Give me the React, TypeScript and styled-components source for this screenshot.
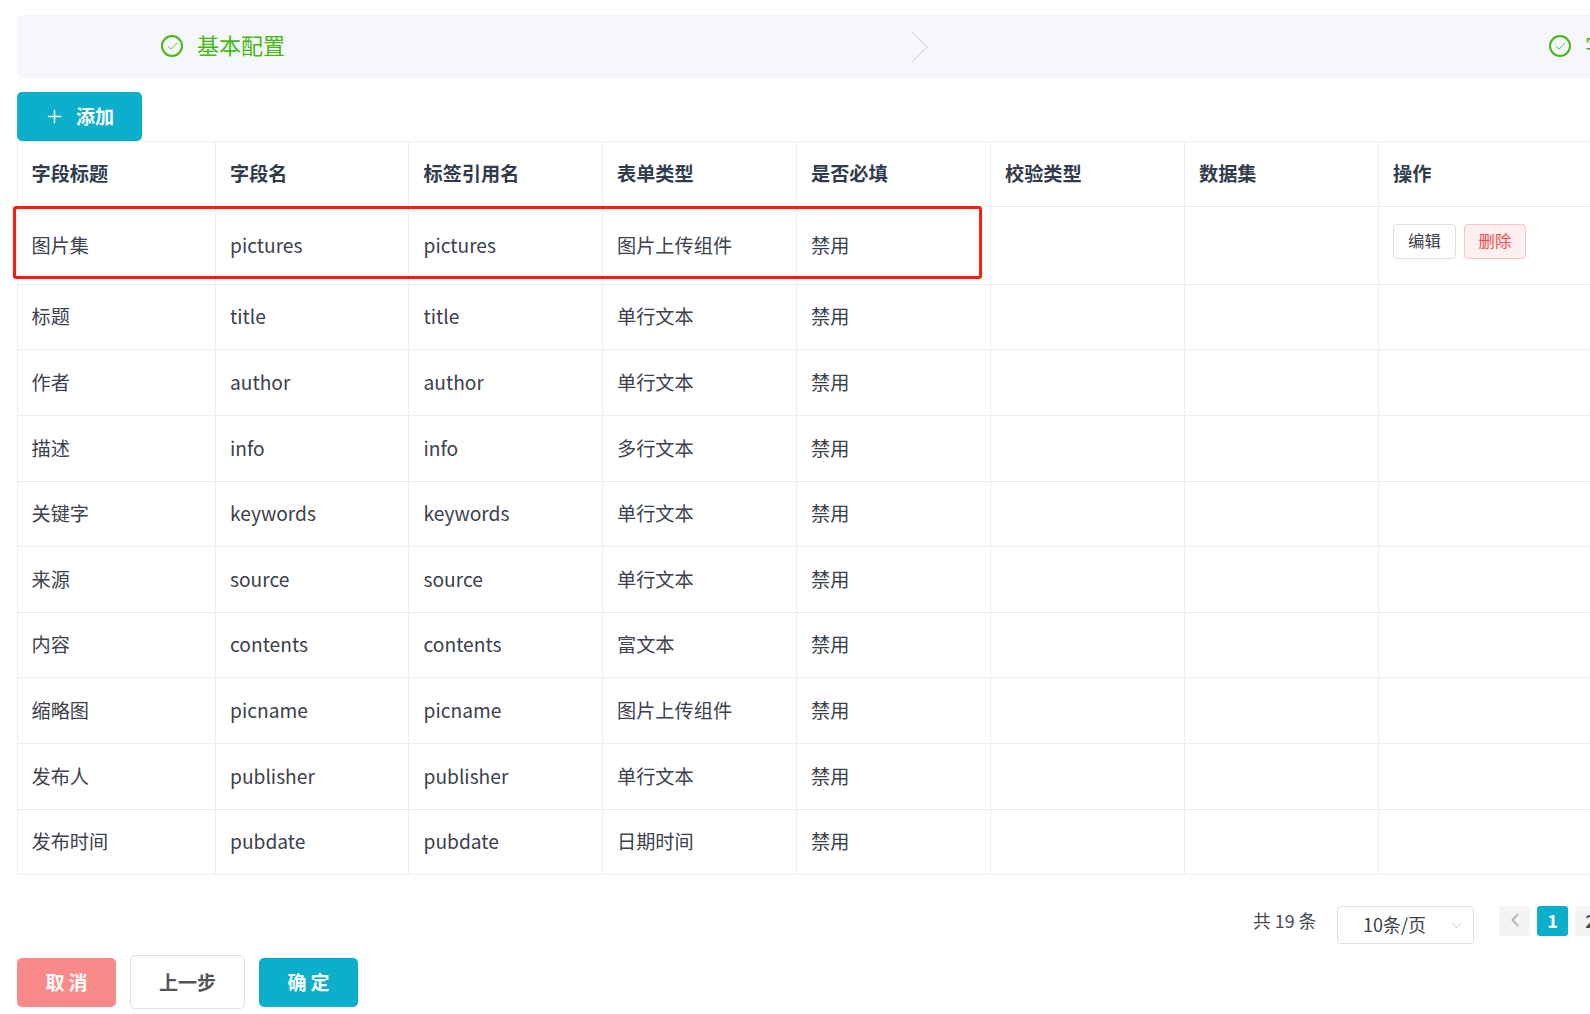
import React from 'react';
import styled, { createGlobalStyle } from 'styled-components';
import { Check, ChevronDown, ChevronLeft, Plus } from 'lucide-react';

const GlobalStyle = createGlobalStyle`
  html, body {
    margin: 0;
    padding: 0;
    background: #fff;
    overflow: hidden;
    height: 100%;
  }
  body {
    font-family: "Noto Sans CJK SC", "Noto Sans", sans-serif;
    color: #3f4450;
  }
`;

const Page = styled.div`
  width: 1700px;
  height: 1014px;
  padding: 15px 0 0 17px;
  box-sizing: border-box;
`;

const StepBar = styled.div`
  width: 1683px;
  height: 63px;
  background: #f5f7fa;
  border-radius: 6px 0 0 6px;
  display: flex;
  align-items: center;
  padding-left: 144px;
  box-sizing: border-box;
`;

const Step = styled.div<{ $width: number }>`
  width: ${p => p.$width}px;
  display: flex;
  align-items: center;
  gap: 14px;
  flex-shrink: 0;
  font-size: 22px;
  line-height: 30px;
  padding-bottom: 1px;
  color: #45b812;
`;

const StepLabel = styled.span`
  position: relative;
  top: -2px;
`;

const StepIcon = styled.span`
  width: 22px;
  height: 22px;
  box-sizing: border-box;
  border: 2px solid #45b812;
  border-radius: 50%;
  display: flex;
  align-items: center;
  justify-content: center;
`;

const StepArrow = styled.svg`
  width: 16px;
  height: 30px;
  flex-shrink: 0;
  margin-right: 621px;
`;

const Toolbar = styled.div`
  padding-top: 14px;
  height: 49px;
  box-sizing: content-box;
`;

const AddButton = styled.button`
  width: 125px;
  height: 49px;
  border: 0;
  border-radius: 5px;
  background: #0bafcc;
  color: #fff;
  font: 700 19px "Noto Sans CJK SC", sans-serif;
  display: flex;
  align-items: center;
  justify-content: center;
  gap: 11px;
  padding: 0 0 2px;

  svg {
    margin: 2px 0 0 -1px;
  }
`;

const TableWrap = styled.div`
  position: relative;
`;

const Table = styled.table`
  border-collapse: collapse;
  table-layout: fixed;
  width: 1683px;
  font-size: 19.2px;
  border-left: 1px solid #ebeef5;
`;

const HeadCell = styled.th`
  height: 65px;
  padding: 0 0 3px 14px;
  box-sizing: border-box;
  border: 1px solid #ebeef5;
  border-left: 0;
  text-align: left;
  font-weight: 700;
  font-size: 19.2px;
  color: #333c4d;

  &:first-child {
    padding-left: 13.5px;
  }
  &:nth-child(3) {
    padding-left: 14.5px;
  }
`;

const Row = styled.tr<{ $height: number }>`
  height: ${p => p.$height}px;
`;

const Cell = styled.td`
  padding: 0 0 2px 14px;
  box-sizing: border-box;
  border: 1px solid #ebeef5;
  border-left: 0;
  color: #3c414d;
  white-space: nowrap;

  &:first-child {
    padding-left: 13.5px;
  }
  &:nth-child(3) {
    padding-left: 14.5px;
  }
`;

const ActionCell = styled(Cell)`
  padding-bottom: 9px;
`;

const ActionGroup = styled.div`
  display: flex;
  gap: 8px;
`;

const SmallButton = styled.button<{ $danger?: boolean }>`
  height: 35px;
  width: ${p => (p.$danger ? 62 : 63)}px;
  padding: 0 0 2px;
  border-radius: 4px;
  font: 400 16.4px "Noto Sans CJK SC", sans-serif;
  border: 1px solid ${p => (p.$danger ? '#fbc4c4' : '#dcdfe6')};
  background: ${p => (p.$danger ? '#fef0f0' : '#fff')};
  color: ${p => (p.$danger ? '#f4484a' : '#3c414d')};
`;

const Highlight = styled.div`
  position: absolute;
  left: -4px;
  top: 65px;
  width: 969px;
  height: 73px;
  border: 3px solid #fb1d12;
  border-radius: 3px;
  box-sizing: border-box;
  pointer-events: none;
`;

const Pager = styled.div`
  display: flex;
  align-items: flex-start;
  padding: 31px 0 0 1236px;
  box-sizing: content-box;
  height: 38px;
`;

const PagerTotal = styled.span`
  width: 84px;
  flex-shrink: 0;
  font-size: 17.8px;
  line-height: 28px;
  color: #454953;
`;

const PageSize = styled.div`
  width: 137px;
  height: 38px;
  flex-shrink: 0;
  box-sizing: border-box;
  border: 1px solid #dcdfe6;
  border-radius: 4px;
  display: flex;
  align-items: center;
  justify-content: space-between;
  padding: 0 7px 3px 25px;
  font-size: 18px;
  color: #3c414d;

  svg {
    margin-top: 3px;
  }
`;

const PageButton = styled.div<{ $active?: boolean; $left?: number }>`
  width: 31px;
  height: 30px;
  flex-shrink: 0;
  margin-left: ${p => p.$left ?? 7}px;
  padding-bottom: 2px;
  box-sizing: border-box;
  border-radius: 3px;
  background: ${p => (p.$active ? '#0bafcc' : '#f4f4f5')};
  color: ${p => (p.$active ? '#fff' : '#454a55')};
  font-weight: 700;
  font-size: 18px;
  display: flex;
  align-items: center;
  justify-content: center;
`;

const Footer = styled.div`
  display: flex;
  align-items: center;
  gap: 14px;
  margin-top: 11px;
`;

const FooterButton = styled.button<{ $tone: 'cancel' | 'plain' | 'primary' }>`
  width: ${p => (p.$tone === 'plain' ? 115 : 99)}px;
  height: ${p => (p.$tone === 'plain' ? 54 : 49)}px;
  padding: 0 0 1px ${p => (p.$tone === 'plain' ? 0 : 4)}px;
  border-radius: 5px;
  border: ${p => (p.$tone === 'plain' ? '1px solid #dcdfe6' : '0')};
  background: ${p => ({ cancel: '#fa8a8a', plain: '#fff', primary: '#0bafcc' })[p.$tone]};
  color: ${p => (p.$tone === 'plain' ? '#555' : '#fff')};
  font: 700 19px "Noto Sans CJK SC", sans-serif;
  letter-spacing: ${p => (p.$tone === 'plain' ? 0 : 4)}px;
`;

const columns = ['字段标题', '字段名', '标签引用名', '表单类型', '是否必填', '校验类型', '数据集', '操作'];
const columnWidths = [198, 193, 194, 194, 194, 194, 194, 322];

const rows = [
  { title: '图片集', name: 'pictures', type: '图片上传组件', height: 78 },
  { title: '标题', name: 'title', type: '单行文本', height: 65 },
  { title: '作者', name: 'author', type: '单行文本', height: 66 },
  { title: '描述', name: 'info', type: '多行文本', height: 66 },
  { title: '关键字', name: 'keywords', type: '单行文本', height: 65 },
  { title: '来源', name: 'source', type: '单行文本', height: 66 },
  { title: '内容', name: 'contents', type: '富文本', height: 65 },
  { title: '缩略图', name: 'picname', type: '图片上传组件', height: 66 },
  { title: '发布人', name: 'publisher', type: '单行文本', height: 66 },
  { title: '发布时间', name: 'pubdate', type: '日期时间', height: 65 },
];

const StepMark = () => (
  <StepIcon>
    <Check size={13} strokeWidth={1.5} color="#45b812" />
  </StepIcon>
);

export default function App() {
  return (
    <Page>
      <GlobalStyle />
      <StepBar>
        <Step $width={751}>
          <StepMark />
          <StepLabel>基本配置</StepLabel>
        </Step>
        <StepArrow viewBox="0 0 16 30">
          <path d="M0.5 0.5 L15 15 L0.5 29.5" fill="none" stroke="#c9ccd4" strokeWidth="1" />
        </StepArrow>
        <Step $width={200}>
          <StepMark />
          <StepLabel>字段配置</StepLabel>
        </Step>
      </StepBar>

      <Toolbar>
        <AddButton>
          <Plus size={21} strokeWidth={1.7} />
          添加
        </AddButton>
      </Toolbar>

      <TableWrap>
        <Table>
          <colgroup>
            {columnWidths.map((w, i) => (
              <col key={i} width={w} />
            ))}
          </colgroup>
          <thead>
            <tr>
              {columns.map(c => (
                <HeadCell key={c}>{c}</HeadCell>
              ))}
            </tr>
          </thead>
          <tbody>
            {rows.map((row, i) => (
              <Row key={row.name} $height={row.height}>
                <Cell>{row.title}</Cell>
                <Cell>{row.name}</Cell>
                <Cell>{row.name}</Cell>
                <Cell>{row.type}</Cell>
                <Cell>禁用</Cell>
                <Cell />
                <Cell />
                {i === 0 ? (
                  <ActionCell>
                    <ActionGroup>
                      <SmallButton>编辑</SmallButton>
                      <SmallButton $danger>删除</SmallButton>
                    </ActionGroup>
                  </ActionCell>
                ) : (
                  <Cell />
                )}
              </Row>
            ))}
          </tbody>
        </Table>
        <Highlight />
      </TableWrap>

      <Pager>
        <PagerTotal>共 19 条</PagerTotal>
        <PageSize>
          10条/页
          <ChevronDown size={19} strokeWidth={1} color="#b4b8c2" />
        </PageSize>
        <PageButton $left={25}>
          <ChevronLeft size={22} strokeWidth={2} color="#b0b5c2" />
        </PageButton>
        <PageButton $active>1</PageButton>
        <PageButton>2</PageButton>
      </Pager>

      <Footer>
        <FooterButton $tone="cancel">取消</FooterButton>
        <FooterButton $tone="plain">上一步</FooterButton>
        <FooterButton $tone="primary">确定</FooterButton>
      </Footer>
    </Page>
  );
}
